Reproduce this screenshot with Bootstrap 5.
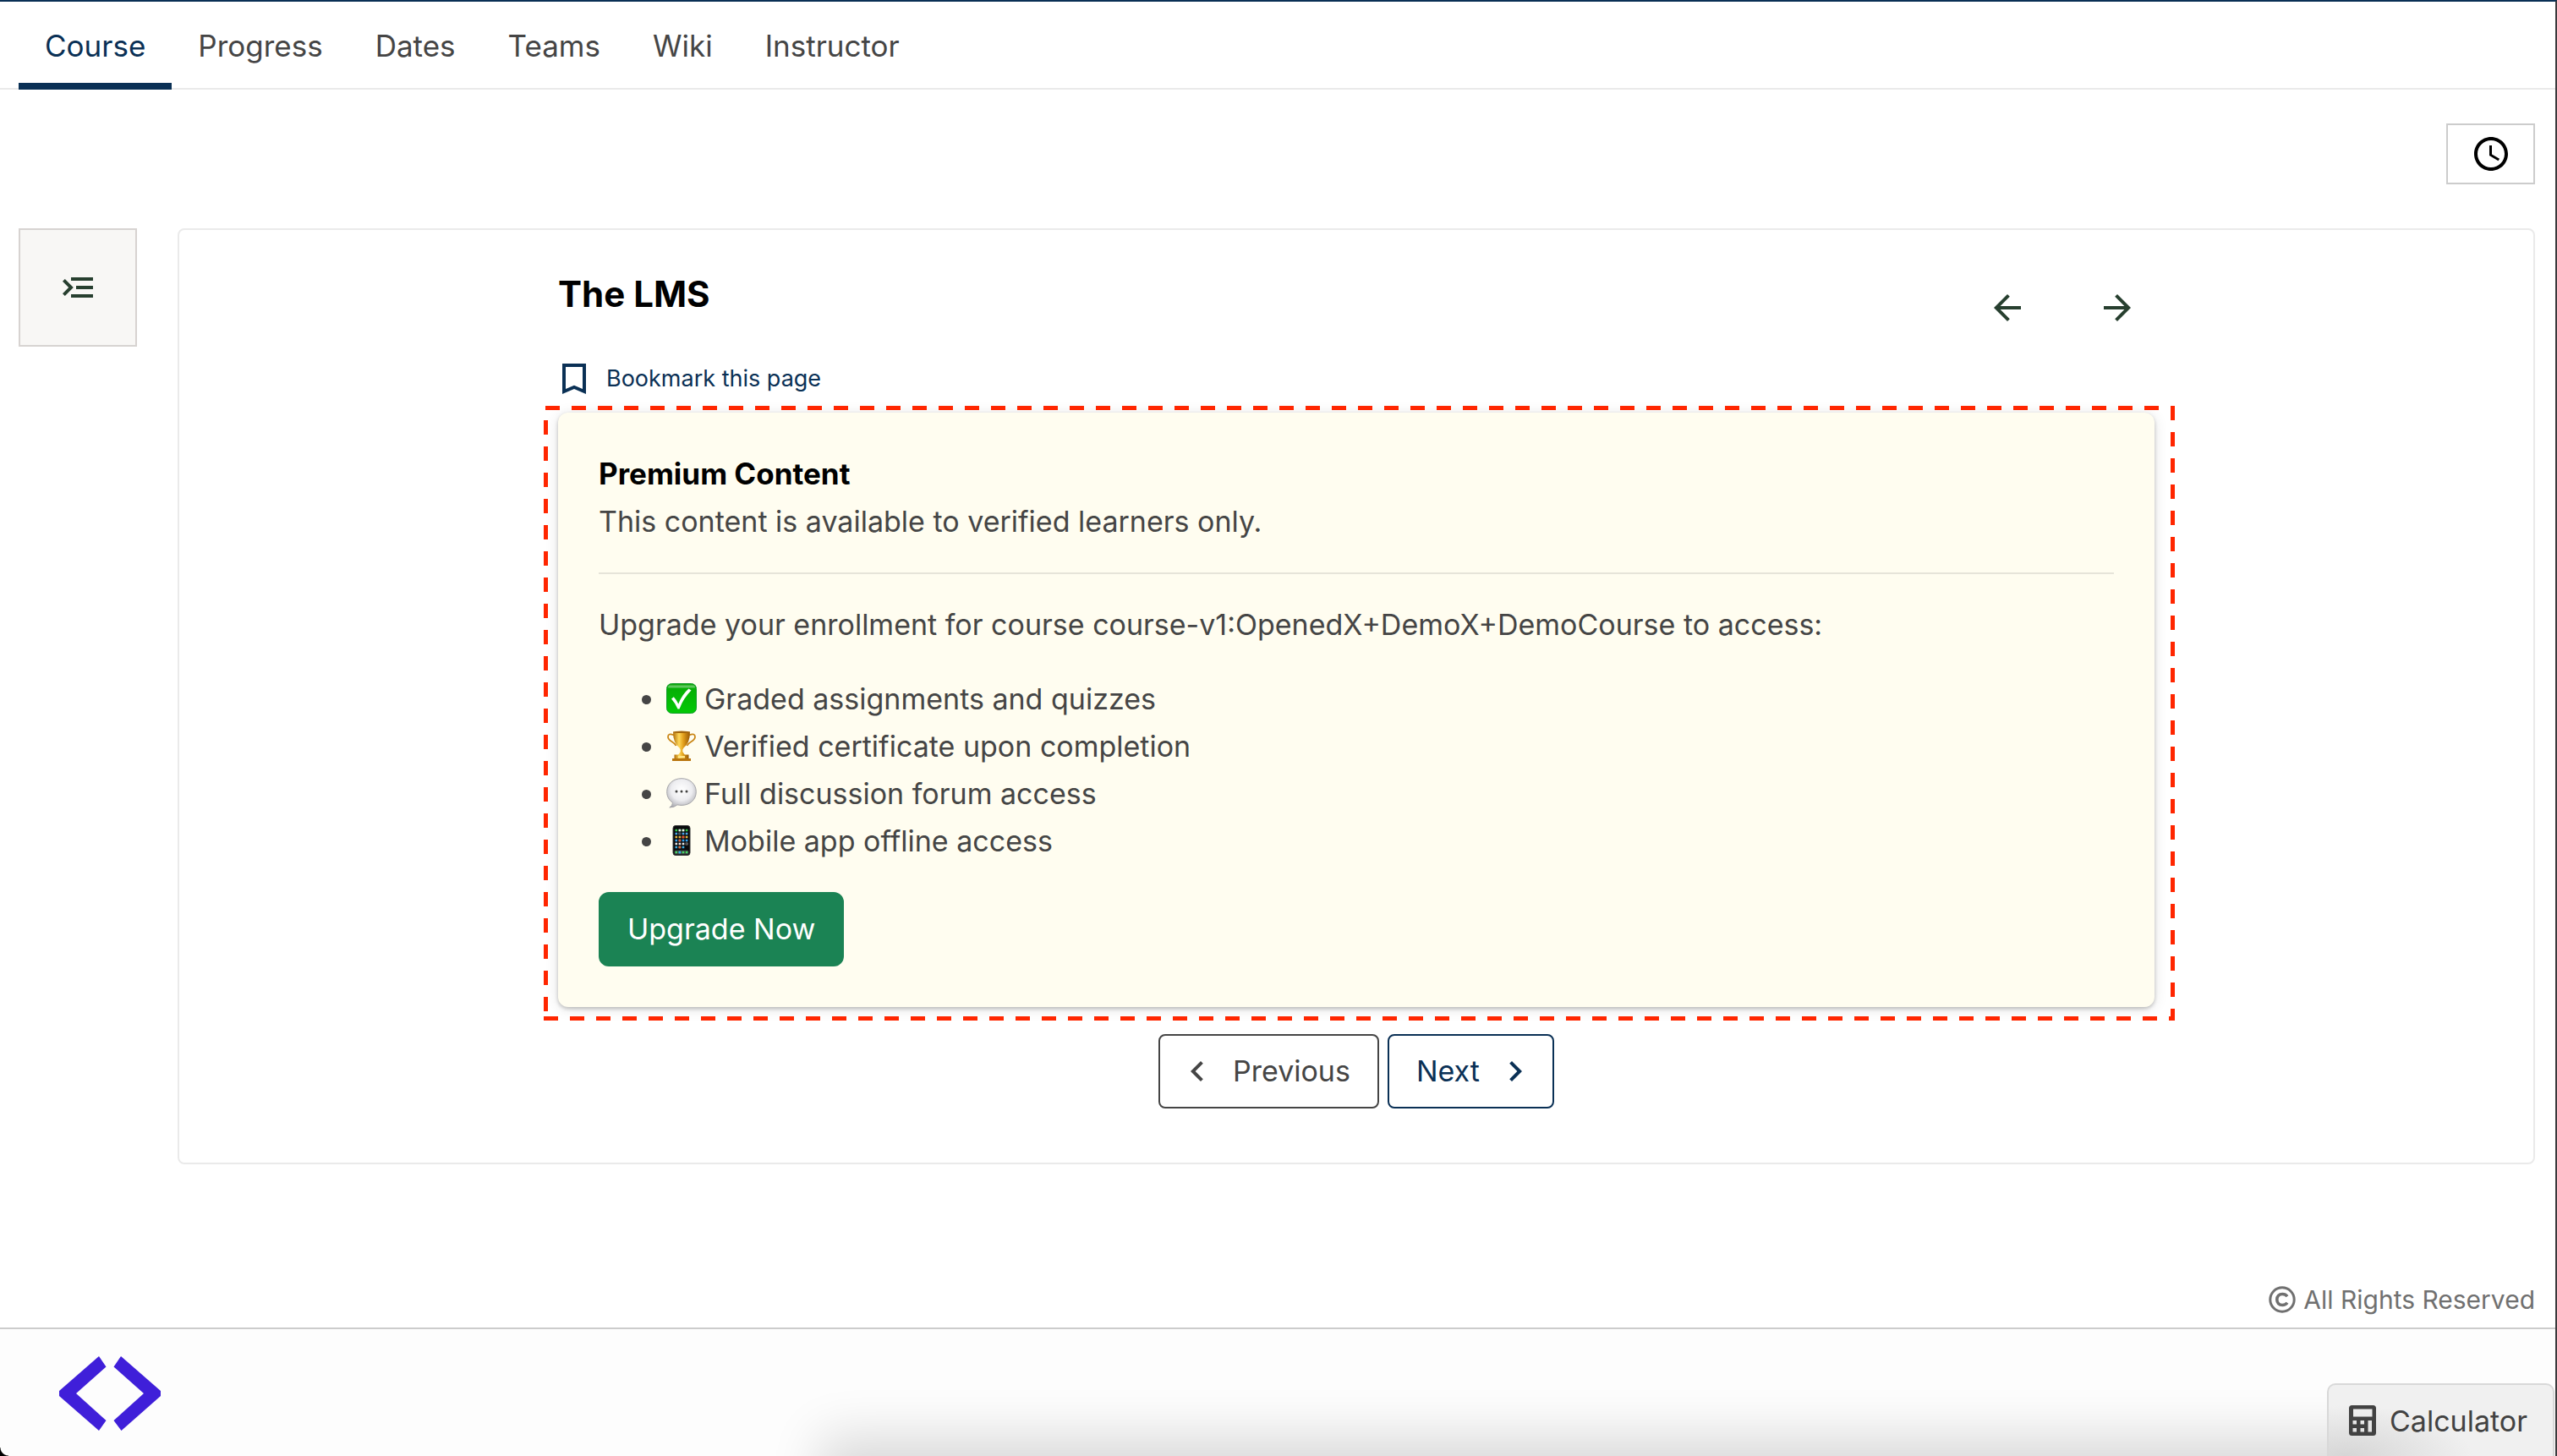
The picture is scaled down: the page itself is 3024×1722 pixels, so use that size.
<!DOCTYPE html>
<html lang="en">
<head>
<meta charset="utf-8">
<meta name="viewport" content="width=device-width, initial-scale=1">
<title>The LMS</title>
<link href="https://cdn.jsdelivr.net/npm/bootstrap@5.3.0/dist/css/bootstrap.min.css" rel="stylesheet">
<style>
  :root { --navy: #0a3055; --ink: #454545; --forest: #273f2f; --line: #eaeaea; }
  body { font-family: Inter, "Liberation Sans", sans-serif; font-size: 34px; line-height: 56px; color: var(--ink);
         border-top: 2px solid var(--navy); border-right: 2px solid #3b3b3d; overflow-x: hidden; }
  svg { display: block; fill: currentColor; flex-shrink: 0; }
  .course-tabs { padding-left: 22px; box-shadow: inset 0 -2px 0 var(--line); font-size: 35px; }
  .course-tabs .nav-link { color: var(--ink); padding: 24px 31px 16px; border-bottom: 8px solid transparent; }
  .course-tabs .nav-link.active { color: var(--navy); border-bottom-color: var(--navy); }
  .page-main { padding: 40px 24px 0 22px; }
  .icon-btn { padding: 0; border-radius: 0; display: flex; align-items: center; justify-content: center; }
  .clock-btn { border: 2px solid #ccc; width: 105px; height: 72px; color: #000; margin-bottom: 52px; }
  .outline-btn { border: 2px solid #d7d3d1; background: #f8f7f5; color: var(--forest); width: 140px; height: 140px; }
  .unit-row { gap: 48px; }
  .unit-panel { border: 2px solid var(--line); border-radius: 8px; padding: 48px 32px 64px; min-width: 0; }
  .unit-column { max-width: 1888px; }
  .unit-title { font-size: 42px; line-height: 56px; font-weight: 700; color: #000; }
  .arrow-group { gap: 42px; }
  .arrow-btn { width: 88px; height: 88px; color: var(--forest); }
  .bookmark-btn { height: 80px; gap: 24px; padding: 0 5px; border: 0; font-size: 27px; color: var(--navy); }
  .paywall { background: #fffdf0; border-radius: 12px; padding: 48px; box-shadow: 0 2px 4px rgba(0,0,0,.22), 0 2px 16px rgba(0,0,0,.12); }
  .paywall::after { content: ""; position: absolute; inset: -8px -24px -16px -17px; pointer-events: none;
    --across: repeating-linear-gradient(90deg, #ff2600 0 17px, transparent 17px 31px);
    --down: repeating-linear-gradient(180deg, #ff2600 0 17px, transparent 17px 31px);
    background: var(--across) 2px 0 / 100% 5px no-repeat, var(--across) 0 100% / 100% 5px no-repeat,
                var(--down) 0 17px / 5px 100% no-repeat, var(--down) 100% 0 / 5px 100% no-repeat; }
  .paywall h2 { font-size: 35px; line-height: 48px; font-weight: 700; color: #000; margin: 0 0 5px; }
  .paywall hr { margin: 32px 0; border-top: 2px solid #e6e4d9; opacity: 1; }
  .benefits { padding-left: 80px; margin: 32px 0; }
  .benefits svg { display: inline-block; width: 36px; height: 36px; margin-right: 9px; vertical-align: -5px; }
  .lms-btn { height: 88px; padding: 0 32px; font-size: 34px; line-height: 56px; border-width: 2px; border-radius: 8px; }
  .btn-upgrade, .btn-upgrade:hover { background: #1b8354; border-color: #1b8354; color: #fff; border-radius: 12px; }
  .step-btn { gap: 30px; }
  .step-prev { color: var(--ink); border-color: var(--ink); }
  .step-next { color: var(--navy); border-color: var(--navy); }
  .step-row { gap: 10px; margin-top: 32px; }
  .rights { margin-top: 136px; padding: 0 24px 9px; gap: 9px; font-size: 30px; line-height: 48px; color: #707070; }
  .site-footer { border-top: 2px solid #ccc; background: #fdfdfd; padding: 32px 70px 24px; overflow: hidden; }
  .bottom-shade { left: 994px; right: 200px; bottom: -80px; height: 80px; box-shadow: 0 0 60px 24px rgba(0,0,0,.14); }
  .corner-cut { left: 0; bottom: 0; width: 10px; height: 10px; background: radial-gradient(circle at 100% 0, transparent 9px, #000 10px); }
  .calc-btn { right: 1px; bottom: 0; height: 86px; padding: 0 30px 0 24px; gap: 16px; border: 2px solid #d8d8d8; border-bottom: 0;
    border-radius: 10px 10px 0 0; font-size: 34px; color: #424242; background: radial-gradient(ellipse 150px 60px at 20px 100%, #d6d6d6, #f0f0f0); }
</style>
<script src="https://cdn.jsdelivr.net/npm/bootstrap@5.3.0/dist/js/bootstrap.bundle.min.js"></script>
</head>
<body class="d-flex flex-column min-vh-100 position-relative bg-white">
<nav class="nav course-tabs" aria-label="Course">
  <a class="nav-link active" href="#" aria-current="page">Course</a>
  <a class="nav-link" href="#">Progress</a>
  <a class="nav-link" href="#">Dates</a>
  <a class="nav-link" href="#">Teams</a>
  <a class="nav-link" href="#">Wiki</a>
  <a class="nav-link" href="#">Instructor</a>
</nav>

<main class="page-main">
  <button type="button" class="btn icon-btn clock-btn ms-auto" aria-label="Notifications">
    <svg width="48" height="48" viewBox="0 0 24 24"><path d="M11.99 2C6.47 2 2 6.48 2 12s4.47 10 9.99 10C17.52 22 22 17.52 22 12S17.52 2 11.99 2zM12 20c-4.42 0-8-3.58-8-8s3.58-8 8-8 8 3.58 8 8-3.58 8-8 8zm.5-13H11v6l5.25 3.15.75-1.23-4.5-2.67z"/></svg>
  </button>
  <div class="d-flex align-items-start unit-row">
    <button type="button" class="btn icon-btn outline-btn flex-shrink-0" aria-label="Course outline">
      <svg width="48" height="48" viewBox="0 0 24 24"><path d="M21 18H8v-2h13v2zm0-5H11v-2h10v2zm0-7v2H8V6h13zM3 15.59 6.58 12 3 8.41 4.41 7l5 5-5 5L3 15.59z"/></svg>
    </button>
    <section class="unit-panel flex-grow-1">
      <div class="unit-column mx-auto">
        <div class="d-flex justify-content-between align-items-start">
          <h1 class="unit-title mb-0">The LMS</h1>
          <div class="d-flex arrow-group">
            <button type="button" class="btn icon-btn arrow-btn border-0" aria-label="Previous unit"><svg width="48" height="48" viewBox="0 0 24 24"><path d="M20 11H7.83l5.59-5.59L12 4l-8 8 8 8 1.41-1.41L7.83 13H20v-2z"/></svg></button>
            <button type="button" class="btn icon-btn arrow-btn border-0" aria-label="Next unit"><svg width="48" height="48" viewBox="0 0 24 24"><path d="m12 4-1.41 1.41L16.17 11H4v2h12.17l-5.58 5.59L12 20l8-8z"/></svg></button>
          </div>
        </div>
        <button type="button" class="btn bookmark-btn d-flex align-items-center">
          <svg width="28" height="36" viewBox="5 3 14 18"><path d="M19 3H5v18l7-3 7 3V3zm-2 15-5-2.18L7 18V5h10v13z"/></svg>
          Bookmark this page
        </button>
        <article class="paywall position-relative">
          <h2>Premium Content</h2>
          <p class="mb-0">This content is available to verified learners only.</p>
          <hr>
          <p class="mb-0">Upgrade your enrollment for course course-v1:OpenedX+DemoX+DemoCourse to access:</p>
          <ul class="benefits">
            <li><svg viewBox="0 0 36 36" aria-hidden="true"><defs><linearGradient id="gr" x2="0" y2="1"><stop offset="0" stop-color="#12a50c"/><stop offset=".15" stop-color="#06ae05"/><stop offset="1" stop-color="#03c906"/></linearGradient></defs><rect x=".5" y=".5" width="35" height="35" rx="6" fill="url(#gr)" stroke="#109b28"/><path d="M4 2.5h28q2 0 2 3H2q0-3 2-3z" fill="#fff" opacity=".35"/><path d="M6 18.5l2.8-2.3q3.7 4 5.5 8.2Q18.500 13.500 26.500 6.500L29.500 8.500Q20 18 15.500 30.500h-2Q10.500 23.500 6 18.500z" fill="#fff"/></svg>Graded assignments and quizzes</li>
            <li><svg viewBox="0 0 36 36" aria-hidden="true"><defs><linearGradient id="au"><stop offset="0" stop-color="#b06c08"/><stop offset=".35" stop-color="#ffd95a"/><stop offset=".6" stop-color="#e3a01c"/><stop offset="1" stop-color="#965704"/></linearGradient></defs><g fill="none" stroke="#c98514" stroke-width="1.800"><path d="M9 5.500Q2 2.500 2 7.500C2 13 10 13 11.500 18"/><path d="M27 5.500Q34 2.500 34 7.500C34 13 26 13 24.500 18"/></g><path d="M8 1.500h20Q28 15 20.500 20.500Q18.800 22 19.300 25L22 29h-8l2.700-4Q17.200 22 15.500 20.500Q8 15 8 1.500z" fill="url(#au)"/><ellipse cx="18" cy="1.800" rx="10" ry="1.300" fill="#a4660b"/><path d="M9.500 28.500h17v5h-17z" fill="url(#au)"/><path d="M7 33h22v3H7z" fill="#b8740d"/><path d="M14 30h8v2.500h-8z" fill="#ffe486"/></svg>Verified certificate upon completion</li>
            <li><svg viewBox="0 0 36 36" aria-hidden="true"><defs><radialGradient id="bu" cx=".5" cy=".4" r=".65"><stop offset="0" stop-color="#fff"/><stop offset=".55" stop-color="#ededf0"/><stop offset="1" stop-color="#a8a8ae"/></radialGradient></defs><path d="M18 .7C8 .7.7 7.200.7 16.500c0 6 2.800 10.200 6.800 12.800Q7.500 33 3.800 35Q9.500 35 13 31.800q2.500.6 5 .6c10 0 17.300-6.700 17.300-15.900S28 .7 18 .7z" fill="url(#bu)" stroke="#a6a6aa" stroke-width="1"/><g fill="#444"><circle cx="12" cy="16" r="1.500"/><circle cx="18" cy="16" r="1.500"/><circle cx="24" cy="16" r="1.500"/></g></svg>Full discussion forum access</li>
            <li><svg viewBox="0 0 36 36" aria-hidden="true"><rect x="8" y=".5" width="20" height="35" rx="3" fill="#0b0b0d" stroke="#333"/><g stroke-width="2.600" fill="none"><path d="M10.500 6h15" stroke="#35c94a" stroke-dasharray="2.600 1.500"/><path d="M14.600 6h2.600m1.500 0h2.600" stroke="#eee"/><path d="M10.500 10h15" stroke="#4aa7e8" stroke-dasharray="2.600 1.500"/><path d="M14.600 10h2.600" stroke="#555"/><path d="M10.500 14h15" stroke="#e9b93f" stroke-dasharray="2.600 1.500"/><path d="M18.700 14h2.600" stroke="#e54b36"/><path d="M10.500 18h15" stroke="#34a4f0" stroke-dasharray="2.600 1.500"/><path d="M14.600 18h2.600" stroke="#e86032"/><path d="M10.500 22h15" stroke="#e6e6e6" stroke-dasharray="2.600 1.500"/><path d="M22.800 22h2.600" stroke="#555"/><path d="M10.500 26h11" stroke="#37aee5" stroke-dasharray="2.600 1.500"/><path d="M14.600 26h2.600" stroke="#e66b35"/></g><rect x="9.500" y="29.500" width="17" height="5" rx="1.500" fill="#3b3e42"/><path d="M10.500 32h15" stroke="#47d862" stroke-width="2.600" stroke-dasharray="2.600 1.500"/><path d="M14.600 32h2.600" stroke="#38aaf5" stroke-width="2.600"/></svg>Mobile app offline access</li>
          </ul>
          <button type="button" class="btn lms-btn btn-upgrade d-block">Upgrade Now</button>
        </article>
        <div class="d-flex justify-content-center step-row">
          <button type="button" class="btn lms-btn step-btn step-prev d-flex align-items-center"><svg width="24" height="24" viewBox="6 6 12 12"><path d="M15.410 7.410 14 6l-6 6 6 6 1.410-1.410L10.830 12z"/></svg>Previous</button>
          <button type="button" class="btn lms-btn step-btn step-next d-flex align-items-center">Next<svg width="24" height="24" viewBox="6 6 12 12"><path d="M10 6 8.590 7.410 13.170 12l-4.580 4.590L10 18l6-6z"/></svg></button>
        </div>
      </div>
    </section>
  </div>
</main>

<div class="d-flex justify-content-end align-items-center rights">
  <svg width="32" height="32" viewBox="0 0 32 32" stroke="#707070" aria-hidden="true"><circle cx="16" cy="16" r="14.200" fill="none" stroke-width="3"/><path d="M22 12.200Q20 9.500 16.300 9.500C12.300 9.500 9.800 12.300 9.800 16s2.500 6.500 6.500 6.500q3.700 0 5.700-2.700" fill="none" stroke-width="3.600"/></svg>
  <span>All Rights Reserved</span>
</div>

<footer class="site-footer flex-grow-1 position-relative">
  <div class="bottom-shade position-absolute"></div>
  <a href="#" class="d-flex position-relative" aria-label="Home"><svg width="120" height="88" viewBox="0 0 120 88"><g fill="#3f1fd9"><path d="M47 0 55.500 12.500 20 44 55.500 76 47 88 0 47V41z"/><path d="M73 0 64.500 12.500 100 44 64.500 76 73.500 88 120 47V41z"/></g></svg></a>
  <div class="corner-cut position-absolute"></div>
</footer>
<button type="button" class="btn calc-btn position-absolute d-flex align-items-center">
  <svg width="32" height="36" viewBox="0 0 32 36" aria-hidden="true"><path fill-rule="evenodd" d="M3.500 0h25Q32 0 32 3.500v29Q32 36 28.500 36h-25Q0 36 0 32.500v-29Q0 0 3.500 0zM5 4.500V13.500H27.500V4.500zM4.500 18v4.500H9V18zM13.500 18v4.500H18V18zM22.500 18v13.500H27V18zM4.500 27v4.500H9V27zM13.500 27v4.500H18V27z"/></svg>
  Calculator
</button>
</body>
</html>
